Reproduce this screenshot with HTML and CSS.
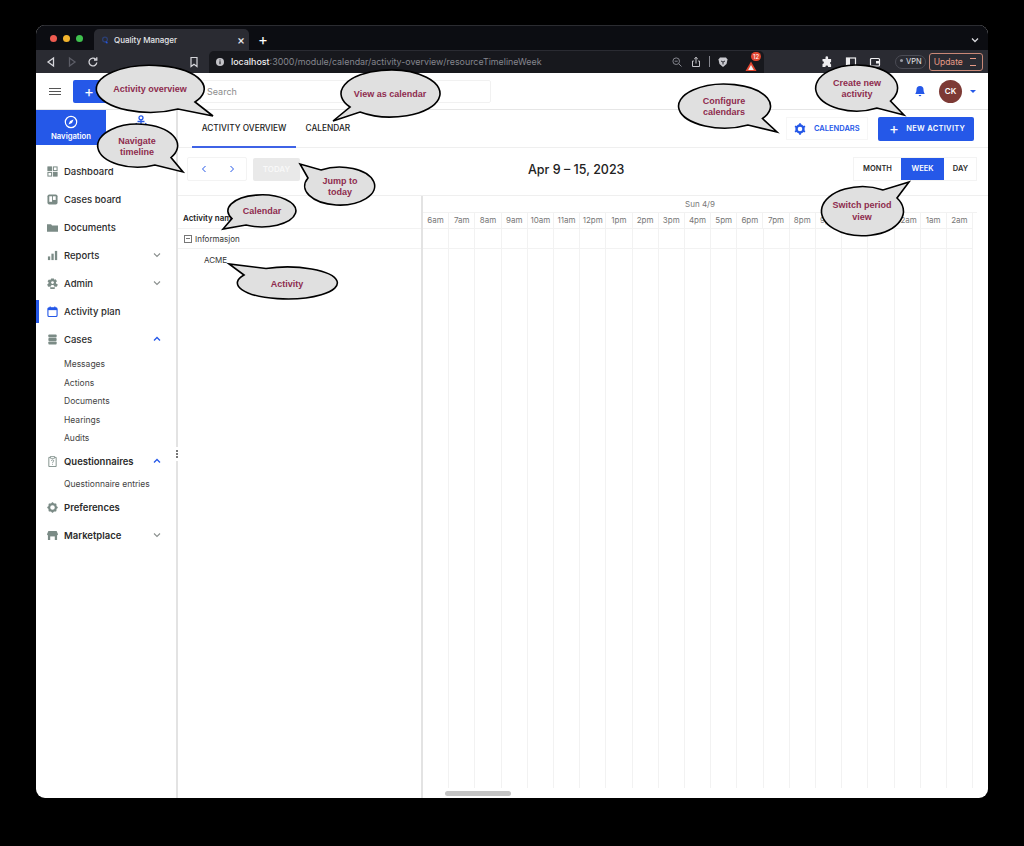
FILE: index.html
```html
<!DOCTYPE html>
<html lang="en">
<head>
    <meta charset="UTF-8">
    <title>Quality Manager</title>
    <link rel="stylesheet" href="styles.css">
</head>
<body>

<div class="window">
    <div class="tabstrip">
        <div class="lights"><i class="red"></i><i class="yellow"></i><i class="green"></i></div>
        <div class="tab">
            <svg class="favicon" viewBox="0 0 10 10"><circle cx="5" cy="4.500" r="3" fill="none" stroke="#2b3f73" stroke-width="1.600"/><path d="M6 7l2 2" stroke="#2558e8" stroke-width="1.600"/></svg>
            <span class="tab-title">Quality Manager</span>
            <span class="tab-close">×</span>
        </div>
        <span class="tab-new">+</span>
        <svg class="tab-menu" viewBox="0 0 10 10"><path d="M2 3.500l3 3 3-3" fill="none" stroke="#d8d8dc" stroke-width="1.300"/></svg>
    </div>

    <div class="toolbar">
        <div class="tool-left">
            <svg class="ticon" viewBox="0 0 12 12"><path d="M8.500 2L3 6l5.500 4z" fill="none" stroke="#d5d5da" stroke-width="1.300"/></svg>
            <svg class="ticon" viewBox="0 0 12 12"><path d="M3.500 2L9 6l-5.500 4z" fill="none" stroke="#5c5d66" stroke-width="1.300"/></svg>
            <svg class="ticon" viewBox="0 0 12 12"><path d="M9.800 6.500a3.900 3.900 0 1 1-1.100-3.200M9.800 1.200v2.800H7" fill="none" stroke="#d5d5da" stroke-width="1.300"/></svg>
        </div>
        <svg class="ticon bookmark" viewBox="0 0 12 12"><path d="M3 1.500h6v9L6 8.200 3 10.500z" fill="none" stroke="#d5d5da" stroke-width="1.200"/></svg>
        <div class="address">
            <svg class="info" viewBox="0 0 10 10"><circle cx="5" cy="5" r="4" fill="#c4c4c9"/><path d="M5 4.300v3M5 2.500v1" stroke="#17181d" stroke-width="1.100"/></svg>
            <span class="url"><b>localhost</b>:3000/module/calendar/activity-overview/resourceTimelineWeek</span>
            <div class="address-icons">
                <svg class="ticon" viewBox="0 0 12 12"><circle cx="5.200" cy="5.200" r="3.300" fill="none" stroke="#85868e"/><path d="M7.700 7.700L10.500 10.500M3.700 5.200h3" stroke="#85868e"/></svg>
                <svg class="ticon" viewBox="0 0 12 12"><path d="M3.800 5H2.500v5.500h7V5H8.200M6 7.500V1.300M4.200 3L6 1.300 7.800 3" fill="none" stroke="#c4c4c9"/></svg>
                <i class="sep"></i>
                <svg class="ticon" viewBox="0 0 12 12"><path d="M3 1.500h6l1.500 2L9.500 8 6 11 2.500 8l-1-4.500z" fill="#c9c9cf"/><path d="M4 5l2 1 2-1M6 6v2.500" fill="none" stroke="#2a2b32"/></svg>
                <span class="shield">
                    <svg class="ticon" viewBox="0 0 12 12"><path d="M6 1.500l5.500 9.500H.500z" fill="#e0452f"/><path d="M6 5l2.800 5H3.200z" fill="#f2f2f2"/></svg>
                    <span class="shield-count">12</span>
                </span>
            </div>
        </div>
        <div class="tool-right">
            <svg class="ticon" viewBox="0 0 12 12"><path d="M4.500 1.500a1.300 1.300 0 0 1 2.600 0V3h3v2.700a1.400 1.400 0 0 0 0 2.700v2.600H7.200a1.400 1.400 0 0 0-2.800 0H1.500V8a1.400 1.400 0 0 0 0-2.800V3h3z" fill="#eeeef0"/></svg>
            <svg class="ticon" viewBox="0 0 12 12"><rect x="1.500" y="2" width="9" height="8" fill="none" stroke="#eeeef0" stroke-width="1.200"/><rect x="1.500" y="2" width="3.500" height="8" fill="#eeeef0"/></svg>
            <svg class="ticon" viewBox="0 0 12 12"><rect x="1.500" y="2.500" width="9" height="7.500" rx="1" fill="none" stroke="#eeeef0" stroke-width="1.200"/><rect x="7" y="5" width="3.500" height="2.500" fill="#eeeef0"/></svg>
            <span class="vpn"><i></i>VPN</span>
            <span class="update">Update<em></em></span>
        </div>
    </div>

    <div class="app">
        <header class="topbar">
            <div class="hamburger"><i></i><i></i><i></i></div>
            <button class="add-btn">+</button>
            <div class="search">Search</div>
            <svg class="bell" viewBox="0 0 12 12"><path d="M6 1a3.500 3.500 0 0 0-3.500 3.500c0 3-1 3.700-1.300 4.500h9.600c-.3-.8-1.300-1.500-1.300-4.500A3.500 3.500 0 0 0 6 1zM4.700 10h2.600A1.300 1.300 0 0 1 4.700 10z" fill="#2558e8"/></svg>
            <div class="avatar">CK</div>
            <span class="caret"></span>
        </header>

        <div class="columns">
            <aside class="sidebar">
                <div class="side-tabs">
                    <div class="side-tab active">
                        <svg viewBox="0 0 14 14"><circle cx="7" cy="7" r="5.700" fill="none" stroke="#fff" stroke-width="1.200"/><path d="M9.500 4.500L8 8 4.500 9.500 6 6z" fill="#fff"/></svg>
                        <span>Navigation</span>
                    </div>
                    <div class="side-tab">
                        <svg viewBox="0 0 14 14"><circle cx="7" cy="2.800" r="2" fill="none" stroke="#2558e8" stroke-width="1.300"/><path d="M7 4.800V13M2 8c.5 2.500 2.500 4 5 4s4.500-1.500 5-4M3.500 6.500h7" fill="none" stroke="#2558e8" stroke-width="1.300"/></svg>
                    </div>
                </div>
                <nav class="side-nav">
                    <a class="item">
                        <svg viewBox="0 0 12 12"><g fill="none" stroke="#7b8b86" stroke-width="1.100"><rect x="1" y="1" width="4" height="4"/><rect x="7" y="1" width="4" height="4"/><rect x="1" y="7" width="4" height="4"/><rect x="7" y="7" width="4" height="4"/></g><rect x="1" y="1" width="4" height="4" fill="#7b8b86"/><rect x="7" y="7" width="4" height="4" fill="#7b8b86"/></svg>
                        <span>Dashboard</span>
                    </a>
                    <a class="item">
                        <svg viewBox="0 0 12 12"><rect x=".5" y=".5" width="11" height="11" rx="2" fill="#7b8b86"/><rect x="2.500" y="2.500" width="3" height="6" fill="#fff"/><rect x="6.500" y="2.500" width="3" height="4" fill="#fff"/></svg>
                        <span>Cases board</span>
                    </a>
                    <a class="item">
                        <svg viewBox="0 0 12 12"><path d="M0 2.500h4.500l1 1.200H12V10.500H0z" fill="#7b8b86"/></svg>
                        <span>Documents</span>
                    </a>
                    <a class="item">
                        <svg viewBox="0 0 12 12"><rect x="1" y="7" width="2.500" height="4" fill="#7b8b86"/><rect x="4.800" y="4" width="2.500" height="7" fill="#7b8b86"/><rect x="8.600" y="1" width="2.500" height="10" fill="#7b8b86"/></svg>
                        <span>Reports</span>
                        <svg class="chev" viewBox="0 0 10 10"><path d="M2 3.500l3 3 3-3" fill="none" stroke="#8a8f8e" stroke-width="1.100"/></svg>
                    </a>
                    <a class="item">
                        <svg viewBox="0 0 12 12"><path d="M4.500 .5h3l.4 1.500 1.500-.6 1.500 2.100-1.200 1.100.2 1.300L11.800 7l-1 2.500-1.500-.3-1 1.500.2 1.300H3.500l.2-1.300-1-1.500-1.500.3-1-2.500 1.400-.9.200-1.300L.600 3.600l1.500-2.100 1.500.6z" fill="#7b8b86"/><circle cx="6" cy="5" r="1.500" fill="#fff"/><path d="M3.500 10c.5-2 1.300-2.500 2.500-2.500S8 8 8.500 10z" fill="#fff"/></svg>
                        <span>Admin</span>
                        <svg class="chev" viewBox="0 0 10 10"><path d="M2 3.500l3 3 3-3" fill="none" stroke="#8a8f8e" stroke-width="1.100"/></svg>
                    </a>
                    <a class="item current">
                        <svg viewBox="0 0 12 12"><rect x="1" y="2" width="10" height="9.500" rx="1.500" fill="none" stroke="#2558e8" stroke-width="1.200"/><rect x="1" y="2" width="10" height="2.500" fill="#2558e8"/><path d="M3.500 .5v2M8.500 .5v2" stroke="#2558e8" stroke-width="1.200"/></svg>
                        <span>Activity plan</span>
                    </a>
                    <a class="item">
                        <svg viewBox="0 0 12 12"><rect x="1.500" y=".5" width="9" height="3.200" rx=".8" fill="#7b8b86"/><rect x="1.500" y="4.400" width="9" height="3.200" rx=".8" fill="#7b8b86"/><rect x="1.500" y="8.300" width="9" height="3.200" rx=".8" fill="#7b8b86"/></svg>
                        <span>Cases</span>
                        <svg class="chev" viewBox="0 0 10 10"><path d="M2 6.500l3-3 3 3" fill="none" stroke="#2558e8" stroke-width="1.300"/></svg>
                    </a>
                    <div class="subnav">
                        <a>Messages</a>
                        <a>Actions</a>
                        <a>Documents</a>
                        <a>Hearings</a>
                        <a>Audits</a>
                    </div>
                    <a class="item tight">
                        <svg viewBox="0 0 12 12"><path d="M4 1.500H2v10h8v-10H8" fill="none" stroke="#7b8b86"/><rect x="4" y=".5" width="4" height="2" fill="#fff" stroke="#7b8b86" stroke-width=".8"/><path d="M4.800 5.300c0-1.500 2.500-1.500 2.500 0 0 1-1.300 1-1.300 2.200M6 8.500v1" fill="none" stroke="#7b8b86" stroke-width=".9"/></svg>
                        <span class="strong">Questionnaires</span>
                        <svg class="chev" viewBox="0 0 10 10"><path d="M2 6.500l3-3 3 3" fill="none" stroke="#2558e8" stroke-width="1.300"/></svg>
                    </a>
                    <div class="subnav single">
                        <a>Questionnaire entries</a>
                    </div>
                    <a class="item">
                        <svg viewBox="0 0 12 12"><circle cx="6" cy="6" r="3.700" fill="none" stroke="#7b8b86" stroke-width="2.400"/><path d="M6 .3v2M6 9.700v2M.3 6h2M9.700 6h2M2 2l1.400 1.400M8.600 8.600L10 10M10 2L8.600 3.400M3.400 8.600L2 10" stroke="#7b8b86" stroke-width="1.600"/></svg>
                        <span class="strong">Preferences</span>
                    </a>
                    <a class="item">
                        <svg viewBox="0 0 12 12"><path d="M1.500 1h9L12 4.500a1.500 1.500 0 0 1-1 1.300V11H1V5.800A1.500 1.500 0 0 1 0 4.500z" fill="#7b8b86"/><rect x="3.500" y="7" width="5" height="4" fill="#fff"/></svg>
                        <span class="strong">Marketplace</span>
                        <svg class="chev" viewBox="0 0 10 10"><path d="M2 3.500l3 3 3-3" fill="none" stroke="#8a8f8e" stroke-width="1.100"/></svg>
                    </a>
                </nav>
                <div class="handle"><i></i><i></i><i></i></div>
            </aside>

            <main class="main">
                <div class="view-tabs">
                    <a class="view-tab selected">ACTIVITY OVERVIEW</a>
                    <a class="view-tab">CALENDAR</a>
                    <button class="calendars-btn">
                        <svg viewBox="0 0 12 12"><circle cx="6" cy="6" r="3.500" fill="none" stroke="#2558e8" stroke-width="2.400"/><path d="M6 .3v2M6 9.700v2M1 3.200l1.700 1M9.300 7.800l1.700 1M11 3.200l-1.700 1M2.700 7.800L1 8.800" stroke="#2558e8" stroke-width="1.800"/></svg>
                        CALENDARS
                    </button>
                    <button class="new-btn"><span class="new-plus">+</span>NEW ACTIVITY</button>
                </div>

                <div class="cal-toolbar">
                    <div class="pager">
                        <svg viewBox="0 0 10 10"><path d="M6.500 2L3.500 5l3 3" fill="none" stroke="#2558e8"/></svg>
                        <svg viewBox="0 0 10 10"><path d="M3.500 2l3 3-3 3" fill="none" stroke="#2558e8"/></svg>
                    </div>
                    <button class="today">TODAY</button>
                    <h2 class="range">Apr 9 – 15, 2023</h2>
                    <div class="period">
                        <a>MONTH</a>
                        <a class="on">WEEK</a>
                        <a>DAY</a>
                    </div>
                </div>

                <div class="timeline">
                    <div class="resources">
                        <div class="res-head">Activity name</div>
                        <div class="res-group"><i class="minus"></i>Informasjon</div>
                        <div class="res-row">ACME</div>
                    </div>
                    <div class="slots">
                        <div class="day">Sun 4/9</div>
                        <div class="hours">
                            <span>6am</span><span>7am</span><span>8am</span><span>9am</span><span>10am</span><span>11am</span><span>12pm</span><span>1pm</span><span>2pm</span><span>3pm</span><span>4pm</span><span>5pm</span><span>6pm</span><span>7pm</span><span>8pm</span><span>9pm</span><span>10pm</span><span>11pm</span><span>12am</span><span>1am</span><span>2am</span>
                        </div>
                        <div class="grid"><div class="grid-row"></div></div>
                        <div class="hscroll"><i></i></div>
                    </div>
                </div>
            </main>
        </div>
    </div>
</div>

<!-- callouts laid over the screenshot, page coordinates -->
<svg class="callouts" viewBox="0 0 1024 846">
    <path d="M178 109A54 23.500 0 1 1 195 102L213 116Z"/>
    <text x="150" y="92">Activity overview</text>

    <path d="M350 107A49.500 23.500 0 1 1 360 112L333 121Z"/>
    <text x="390" y="97">View as calendar</text>

    <path d="M748 125A46 22 0 1 1 762.500 118.500L777 132Z"/>
    <text x="724" y="104">Configure</text>
    <text x="724" y="115">calendars</text>

    <path d="M877 108A41 23 0 1 1 890.500 101L904 115Z"/>
    <text x="857" y="86">Create new</text>
    <text x="857" y="97">activity</text>

    <path d="M155 165A40 21.500 0 1 1 171 157.500L183 172Z"/>
    <text x="137" y="144">Navigate</text>
    <text x="137" y="155">timeline</text>

    <path d="M308 178A35 19 0 1 0 321 170L300 164Z"/>
    <text x="340" y="184">Jump to</text>
    <text x="340" y="195">today</text>

    <path d="M246 225A34 16 0 1 0 232 218.500L223 229Z"/>
    <text x="262" y="214">Calendar</text>

    <path d="M244 275A50 16 0 1 0 266 268.500L229 264Z"/>
    <text x="287" y="287">Activity</text>

    <path d="M897 198A41 24.500 0 1 1 883 190L909 182Z"/>
    <text x="862" y="208">Switch period</text>
    <text x="862" y="220">view</text>
</svg>

</body>
</html>
```

FILE: styles.css
```css
* {
    box-sizing: border-box;
}
html, body {
    margin: 0;
    height: 846px;
    overflow: hidden;
}
body {
    background-color: #000;
    padding: 25px 36px 48px;
    font-family: Inter, "Liberation Sans", sans-serif;
    position: relative;
}
button {
    font-family: inherit;
    border: none;
    cursor: pointer;
}
.window {
    height: 773px;
    border-radius: 9px;
    overflow: hidden;
    display: flex;
    flex-direction: column;
    background-color: #fff;
}

/* browser chrome */
.tabstrip {
    height: 25px;
    background-color: #0c0d12;
    display: flex;
    align-items: flex-end;
    border-top: 1px solid #2b2c31;
}
.lights {
    width: 58px;
    padding-left: 14px;
    align-self: center;
    display: flex;
    gap: 6px;
}
.lights i {
    width: 7px;
    height: 7px;
    border-radius: 50%;
}
.lights .red { background-color: #ee5b50; }
.lights .yellow { background-color: #f3b42d; }
.lights .green { background-color: #3fc14e; }
.tab {
    width: 155px;
    height: 21px;
    background-color: #2a2b32;
    border-radius: 5px 5px 0 0;
    display: flex;
    align-items: center;
    padding: 0 4px 0 7px;
    color: #e6e6ea;
    font-size: 8px;
    font-weight: 500;
}
.favicon {
    width: 8px;
    height: 8px;
    margin-right: 5px;
}
.tab-title {
    flex: 1;
}
.tab-close {
    font-size: 12px;
    line-height: 10px;
}
.tab-new {
    color: #fff;
    font-size: 15px;
    line-height: 21px;
    margin-left: 9px;
}
.tab-menu {
    width: 10px;
    height: 10px;
    margin: 0 8px 5px auto;
}
.toolbar {
    height: 23px;
    background-color: #2a2b32;
    display: flex;
    align-items: center;
    color: #d5d5da;
}
.ticon {
    width: 12px;
    height: 12px;
    flex: none;
}
.tool-left {
    display: flex;
    gap: 9px;
    padding-left: 9px;
    width: 152px;
}
.bookmark {
    margin-right: 9px;
}
.address {
    width: 555px;
    height: 22px;
    background-color: #17181d;
    border-radius: 5px 5px 0 0;
    display: flex;
    align-items: center;
    padding-left: 6px;
}
.info {
    width: 10px;
    height: 10px;
    margin-right: 6px;
}
.url {
    font-size: 8.900px;
    color: #85868e;
    flex: 1;
    white-space: nowrap;
}
.url b {
    color: #f0f0f2;
    font-weight: 500;
}
.address-icons {
    display: flex;
    align-items: center;
    gap: 7px;
    padding-right: 7px;
}
.sep {
    width: 1px;
    height: 11px;
    background-color: #85868e;
}
.shield {
    position: relative;
    display: block;
    margin-left: 9px;
    height: 12px;
}
.shield-count {
    position: absolute;
    left: 6px;
    top: -4px;
    width: 10px;
    height: 9px;
    border-radius: 5px;
    background-color: #e0452f;
    color: #fff;
    font-size: 6px;
    line-height: 9px;
    text-align: center;
}
.tool-right {
    flex: 1;
    display: flex;
    align-items: center;
    gap: 12px;
    padding-left: 57px;
}
.vpn {
    height: 14px;
    margin-left: 2px;
    border: 1px solid #4b4c55;
    border-radius: 7px;
    padding: 0 3px 0 4px;
    font-size: 7.500px;
    line-height: 12px;
    color: #e3e3e6;
    white-space: nowrap;
}
.vpn i {
    display: inline-block;
    width: 3px;
    height: 3px;
    border-radius: 50%;
    background-color: #9a9ba3;
    margin: 0 3px 1px 0;
    vertical-align: middle;
}
.update {
    height: 18px;
    width: 54px;
    margin-left: -9px;
    border: 1px solid #c98877;
    border-radius: 3px;
    padding-left: 4px;
    font-size: 8.500px;
    line-height: 16px;
    color: #e79b87;
    position: relative;
}
.update em {
    position: absolute;
    right: 6px;
    top: 4px;
    width: 6px;
    height: 8px;
    border-top: 1px solid #e79b87;
    border-bottom: 1px solid #e79b87;
}

/* app header */
.app {
    flex: 1;
    display: flex;
    flex-direction: column;
    min-height: 0;
}
.topbar {
    height: 37px;
    flex: none;
    display: flex;
    align-items: center;
    border-bottom: 1px solid #e6e6e6;
}
.hamburger {
    width: 12px;
    margin: 0 12px 0 13px;
}
.hamburger i {
    display: block;
    height: 1px;
    background-color: #555;
    margin: 2px 0;
}
.add-btn {
    width: 46px;
    height: 23px;
    background-color: #2558e8;
    color: #fff;
    font-size: 15px;
    border-radius: 2px;
    margin-right: 81px;
    text-align: left;
    padding-left: 11px;
}
.search {
    width: 291px;
    height: 23px;
    border: 1px solid #f1f1f1;
    border-radius: 2px;
    font-size: 9px;
    line-height: 22px;
    color: #8c8c8c;
    padding-left: 6px;
}
.bell {
    width: 12px;
    height: 12px;
    margin-left: auto;
}
.avatar {
    width: 23px;
    height: 23px;
    margin-left: 13px;
    border-radius: 50%;
    background-color: #7d3a35;
    color: #fff;
    font-size: 8px;
    font-weight: 600;
    line-height: 23px;
    text-align: center;
}
.caret {
    width: 0;
    height: 0;
    margin: 0 12px 0 8px;
    border-left: 3px solid transparent;
    border-right: 3px solid transparent;
    border-top: 3px solid #2558e8;
}

/* sidebar */
.columns {
    flex: 1;
    display: flex;
    min-height: 0;
}
.sidebar {
    width: 142px;
    flex: none;
    border-right: 2px solid #e3e3e3;
    position: relative;
}
.side-tabs {
    display: flex;
    height: 35px;
}
.side-tab {
    width: 70px;
    display: flex;
    flex-direction: column;
    align-items: center;
    padding-top: 5px;
    font-size: 7.700px;
    font-weight: 600;
}
.side-tab svg {
    width: 14px;
    height: 14px;
    margin-bottom: 3px;
}
.side-tab.active {
    background-color: #2558e8;
    color: #fff;
}
.side-nav {
    padding-top: 12px;
}
.item {
    height: 28px;
    display: flex;
    align-items: center;
    padding: 0 14px 0 11px;
    font-size: 9.500px;
    font-weight: 500;
    color: #2b2b2b;
    position: relative;
}
.item > svg:first-child {
    width: 11px;
    height: 11px;
    margin-right: 6px;
    flex: none;
}
.item .chev {
    width: 10px;
    height: 10px;
    margin-left: auto;
}
.item .strong {
    font-weight: 600;
}
.item.tight {
    height: 27px;
}
.item.current::before {
    content: "";
    position: absolute;
    left: 0;
    top: 3px;
    bottom: 2px;
    width: 2.500px;
    background-color: #2558e8;
}
.subnav {
    padding-top: 2px;
}
.subnav a {
    display: block;
    height: 18.500px;
    line-height: 18.500px;
    padding-left: 28px;
    font-size: 8.500px;
    color: #444;
}
.subnav.single {
    padding-top: 0;
}
.handle {
    position: absolute;
    right: -2px;
    top: 337px;
    width: 2px;
    height: 14px;
    background-color: #fff;
    display: flex;
    flex-direction: column;
    align-items: center;
    justify-content: center;
    gap: 1px;
}
.handle i {
    width: 2px;
    height: 2px;
    flex: none;
    background-color: #777;
}

/* main panel */
.main {
    flex: 1;
    min-width: 0;
    display: flex;
    flex-direction: column;
}
.view-tabs {
    height: 38px;
    flex: none;
    display: flex;
    align-items: center;
    padding-left: 14px;
    border-bottom: 1px solid #efefef;
    font-size: 8.300px;
    font-weight: 500;
    color: #222;
}
.view-tab {
    height: 38px;
    line-height: 37px;
    padding: 0 9.500px;
}
.view-tab.selected {
    width: 104px;
    text-align: center;
    padding: 0;
    border-bottom: 2px solid #3f63e6;
}
.calendars-btn {
    margin-left: auto;
    height: 23px;
    width: 82px;
    background-color: #fff;
    border: 1px solid #f6f6f6;
    color: #2558e8;
    font-size: 7.500px;
    font-weight: 600;
    display: flex;
    align-items: center;
    gap: 8px;
    padding: 0 0 0 7px;
}
.calendars-btn svg {
    width: 12px;
    height: 12px;
}
.new-btn {
    width: 96px;
    height: 24px;
    margin: 0 14px 0 10px;
    background-color: #2558e8;
    color: #fff;
    font-size: 7.500px;
    font-weight: 600;
    border-radius: 2px;
    display: flex;
    align-items: center;
    padding-left: 11px;
    letter-spacing: .3px;
}
.new-plus {
    font-size: 15px;
    font-weight: 400;
    line-height: 15px;
    margin-right: 7px;
}
.cal-toolbar {
    height: 47px;
    flex: none;
    display: flex;
    align-items: center;
    padding: 0 11px 5px 9px;
    position: relative;
}
.pager {
    width: 60px;
    height: 24px;
    border: 1px solid #f3f3f3;
    border-radius: 2px;
    display: flex;
    align-items: center;
    justify-content: space-between;
    padding: 0 9px 0 11px;
}
.pager svg {
    width: 10px;
    height: 10px;
}
.today {
    width: 47px;
    height: 23px;
    margin-left: 6px;
    background-color: #e9e9e9;
    color: #f8f8f8;
    font-size: 8px;
    font-weight: 600;
    border-radius: 2px;
}
.range {
    margin: 0;
    position: absolute;
    left: 350px;
    font-size: 12.500px;
    font-weight: 500;
    color: #222;
}
.period {
    margin-left: auto;
    height: 24px;
    width: 124px;
    border: 1px solid #f3f3f3;
    display: flex;
    font-size: 7.500px;
    font-weight: 600;
    color: #2b2b2b;
    line-height: 22px;
    text-align: center;
}
.period a {
    flex: none;
    width: 33px;
}
.period a:first-child {
    width: 47px;
}
.period .on {
    width: 43px;
    background-color: #2558e8;
    color: #fff;
}

/* timeline */
.timeline {
    flex: 1;
    min-height: 0;
    display: flex;
    border-top: 1px solid #efefef;
}
.resources {
    width: 245px;
    flex: none;
    border-right: 2px solid #e3e3e3;
    font-size: 8px;
    color: #333;
}
.res-head {
    height: 33px;
    padding: 17px 0 0 5px;
    font-weight: 600;
    font-size: 8px;
    color: #222;
    border-bottom: 1px solid #f2f2f2;
}
.res-group {
    height: 20px;
    display: flex;
    align-items: center;
    padding-left: 6px;
    border-bottom: 1px solid #f2f2f2;
}
.minus {
    width: 8px;
    height: 8px;
    border: 1px solid #777;
    margin-right: 3px;
    position: relative;
}
.minus::after {
    content: "";
    position: absolute;
    left: 1px;
    right: 1px;
    top: 2.500px;
    height: 1px;
    background-color: #777;
}
.res-row {
    padding: 6px 0 0 26px;
}
.slots {
    flex: 1;
    min-width: 0;
    display: flex;
    flex-direction: column;
    position: relative;
}
.day {
    width: 554px;
    height: 17px;
    line-height: 16px;
    text-align: center;
    font-size: 8px;
    color: #777;
    border-bottom: 1px solid #f2f2f2;
}
.hours {
    width: 550px;
    height: 16px;
    display: grid;
    grid-template-columns: repeat(21, 26.200px);
    font-size: 8px;
    color: #777;
    line-height: 14px;
    text-align: center;
    border-bottom: 1px solid #f2f2f2;
}
.hours span {
    border-right: 1px solid #f2f2f2;
}
.grid {
    width: 550px;
    height: 560px;
    flex: 1;
    margin-bottom: 10px;
    background-image: repeating-linear-gradient(to right, transparent 0, transparent 25.200px, #f2f2f2 25.200px, #f2f2f2 26.200px);
}
.grid-row {
    height: 20px;
    border-bottom: 1px solid #f2f2f2;
}
.hscroll {
    position: absolute;
    left: 22px;
    bottom: 2px;
    width: 66px;
    height: 5px;
}
.hscroll i {
    display: block;
    height: 100%;
    border-radius: 3px;
    background-color: #c4c4c4;
}

/* callouts */
.callouts {
    position: absolute;
    left: 0;
    top: 0;
    width: 1024px;
    height: 846px;
    font-family: "Liberation Sans", Arial, sans-serif;
}
.callouts path {
    fill: #e0e0e0;
    stroke: #000;
    stroke-width: 1.600;
}
.callouts text {
    fill: #8e2c4e;
    font-size: 9px;
    font-weight: 700;
    text-anchor: middle;
}
```
